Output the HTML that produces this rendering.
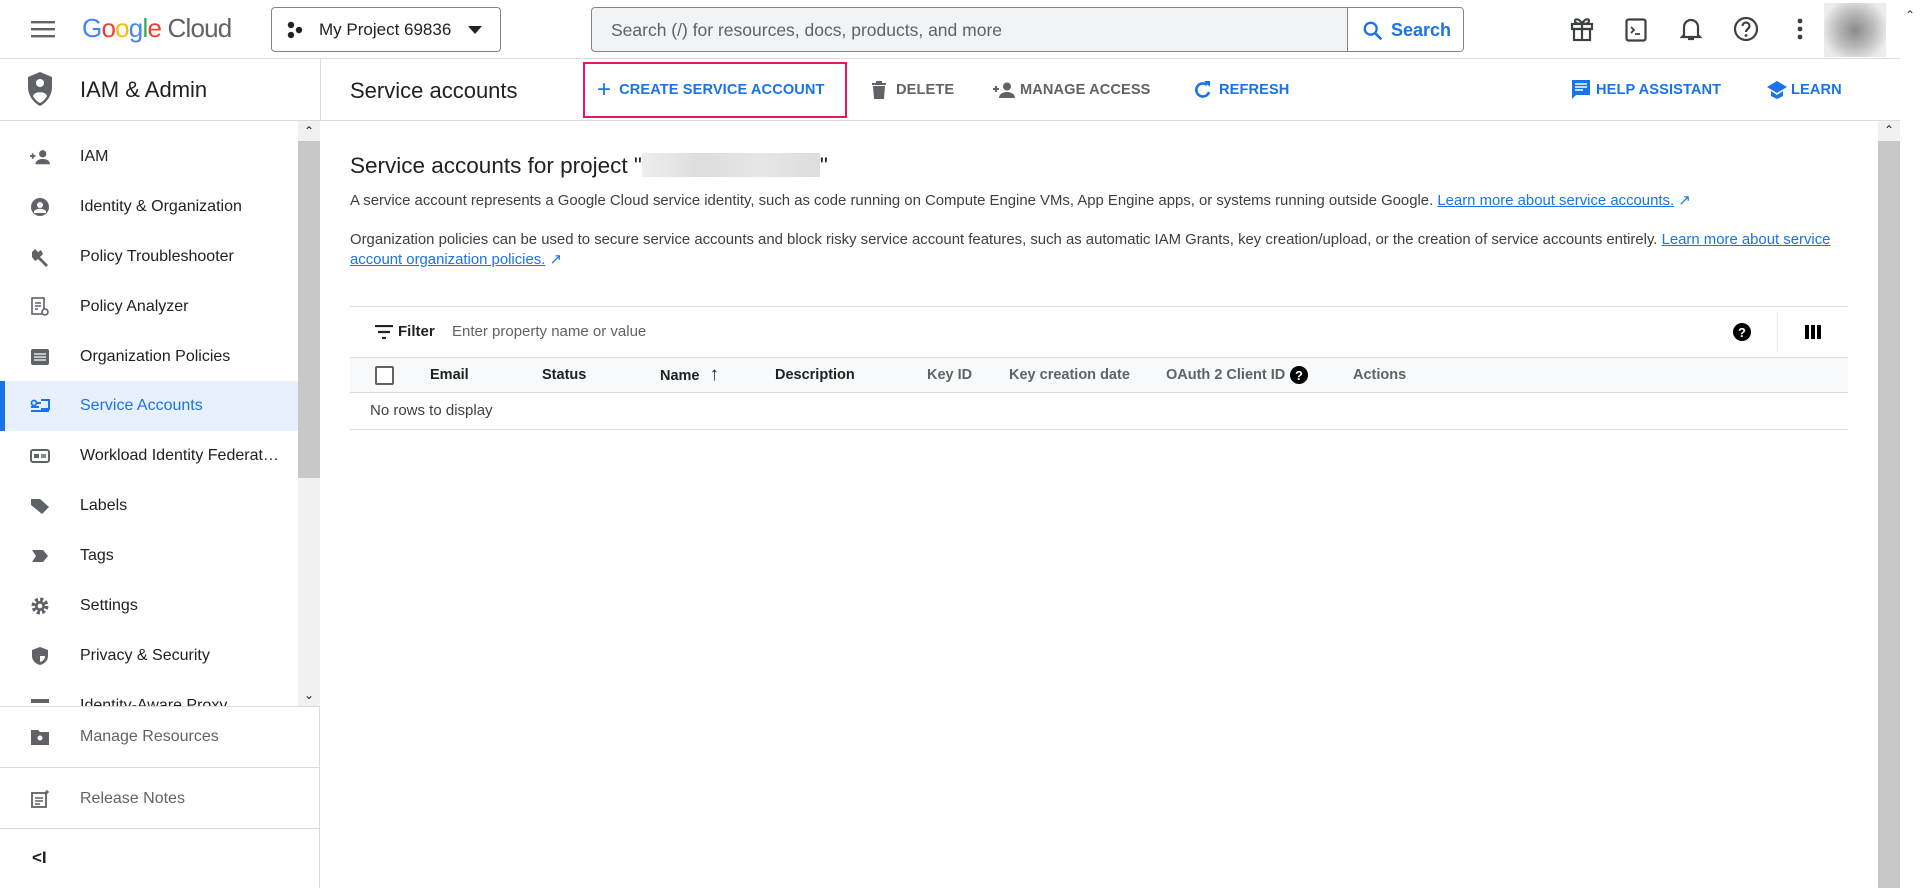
<!DOCTYPE html>
<html><head><meta charset="utf-8"><style>
*{box-sizing:border-box;margin:0;padding:0}
body{width:1920px;height:888px;overflow:hidden;font-family:"Liberation Sans",Arial,sans-serif;color:#202124;background:#fff;position:relative}
.abs{position:absolute}
.hdr{left:0;top:0;width:1920px;height:59px;border-bottom:1px solid #dadce0;background:#fff}
.bar2{left:0;top:59px;width:1900px;height:62px;border-bottom:1px solid #dadce0}
.side{left:0;top:121px;width:320px;height:767px;border-right:1px solid #dadce0}
.item{position:absolute;left:0;width:298px;height:50px;display:flex;align-items:center;font-size:16px;color:#202124}
.item .ic{position:absolute;left:30px;width:20px;height:20px}
.item span{position:absolute;left:80px}
.btn{position:absolute;top:59px;height:62px;display:flex;align-items:center;font-size:14.6px;font-weight:bold;letter-spacing:.1px}
.gray{color:#5f6368}.blue{color:#1a73e8}
a{color:#1a73e8;text-decoration:underline}
.th{position:absolute;top:357px;height:36px;line-height:36px;font-size:14.5px;font-weight:bold;color:#202124}
.th.g{color:#5f6368}
</style></head><body>
<div class="abs hdr">
 <svg class="abs" style="left:31px;top:19px" width="24" height="20" viewBox="0 0 24 20"><rect y="2" width="24" height="2.4" fill="#5f6368"/><rect y="9" width="24" height="2.4" fill="#5f6368"/><rect y="16" width="24" height="2.4" fill="#5f6368"/></svg>
 <div class="abs" style="left:82px;top:13px;font-size:26px;letter-spacing:-.8px"><span style="color:#4285f4">G</span><span style="color:#ea4335">o</span><span style="color:#fbbc04">o</span><span style="color:#4285f4">g</span><span style="color:#34a853">l</span><span style="color:#ea4335">e</span><span style="color:#5f6368"> Cloud</span></div>
 <div class="abs" style="left:271px;top:7px;width:230px;height:45px;border:1px solid #80868b;border-radius:4px">
  <svg class="abs" style="left:14px;top:13px" width="18" height="18" viewBox="0 0 18 18"><circle cx="5" cy="4" r="3.2" fill="#202124"/><circle cx="13" cy="9" r="3.2" fill="#202124"/><circle cx="5" cy="14" r="3.2" fill="#202124"/></svg>
  <div class="abs" style="left:47px;top:12px;font-size:17px">My Project 69836</div>
  <svg class="abs" style="left:196px;top:18px" width="14" height="8"><path d="M0 0h14L7 8z" fill="#202124"/></svg>
 </div>
 <div class="abs" style="left:591px;top:7px;width:873px;height:45px;border:1px solid #80868b;border-radius:4px;background:#f1f3f4;overflow:hidden">
  <div class="abs" style="left:19px;top:12px;font-size:17.5px;color:#5f6368">Search (/) for resources, docs, products, and more</div>
  <div class="abs" style="left:755px;top:0;width:118px;height:45px;background:#fff;border-left:1px solid #80868b">
   <svg class="abs" style="left:14px;top:12px" width="22" height="22" viewBox="0 0 24 24"><circle cx="9.5" cy="9.5" r="6.5" fill="none" stroke="#1a73e8" stroke-width="2.5"/><path d="M14 14l7 7" stroke="#1a73e8" stroke-width="2.8"/></svg>
   <div class="abs blue" style="left:43px;top:12px;font-size:18px;font-weight:bold">Search</div>
  </div>
 </div>
 <svg class="abs" style="left:1570px;top:16px" width="24" height="26" viewBox="0 0 24 26"><g fill="none" stroke="#3c4043" stroke-width="2.2"><rect x="2" y="8" width="20" height="5"/><rect x="4" y="13" width="16" height="11"/><path d="M12 8v16M12 8c-2-5-7-6-7-3s5 3 7 3c2 0 7 0 7-3s-5-2-7 3"/></g></svg>
 <svg class="abs" style="left:1625px;top:18px" width="22" height="24" viewBox="0 0 22 24"><rect x="1.5" y="1.5" width="19" height="21" rx="2" fill="none" stroke="#3c4043" stroke-width="2.2"/><path d="M6 9l3 3-3 3M10 16h5" stroke="#3c4043" stroke-width="1.8" fill="none"/></svg>
 <svg class="abs" style="left:1680px;top:16px" width="22" height="26" viewBox="0 0 22 26"><path d="M4 19V11a7 7 0 0114 0v8l2 2H2z" fill="none" stroke="#3c4043" stroke-width="2.2"/><path d="M8 23h6" stroke="#3c4043" stroke-width="2.2"/></svg>
 <svg class="abs" style="left:1733px;top:16px" width="26" height="26" viewBox="0 0 26 26"><circle cx="13" cy="13" r="11" fill="none" stroke="#3c4043" stroke-width="2.2"/><path d="M9.5 10a3.5 3.5 0 117 0c0 3-3.5 3-3.5 6" fill="none" stroke="#3c4043" stroke-width="2.2"/><circle cx="13" cy="19.5" r="1.4" fill="#3c4043"/></svg>
 <svg class="abs" style="left:1797px;top:18px" width="6" height="22"><circle cx="3" cy="3" r="2.4" fill="#3c4043"/><circle cx="3" cy="11" r="2.4" fill="#3c4043"/><circle cx="3" cy="19" r="2.4" fill="#3c4043"/></svg>
 <div class="abs" style="left:1824px;top:3px;width:62px;height:54px;background:radial-gradient(circle,#8a8a8a 0,#bcbcbc 45%,#ececec 80%)"></div>
</div>
<div class="abs" style="left:1900px;top:0;width:20px;height:888px;background:#fff"><div style="font-size:12px;color:#333;text-align:center;margin-top:8px">&#8963;</div></div>
<div class="abs bar2">
 <svg class="abs" style="left:26px;top:12px" width="28" height="36" viewBox="0 0 28 36"><path d="M14 1l12 5v10c0 9-6 16-12 19C8 32 2 25 2 16V6z" fill="#5f6368"/><circle cx="14" cy="12" r="4" fill="#fff"/><path d="M7 25c1-5 13-5 14 0c-2 4-5 6-7 7c-2-1-5-3-7-7z" fill="#fff"/></svg>
 <div class="abs" style="left:80px;top:18px;font-size:22px">IAM &amp; Admin</div>
 <div class="abs" style="left:320px;top:0;width:1px;height:62px;background:#dadce0"></div>
 <div class="abs" style="left:350px;top:19px;font-size:22px">Service accounts</div>
</div>
<div class="abs" style="left:583px;top:62px;width:264px;height:56px;border:2px solid #e8175d"></div>
<div class="btn blue" style="left:597px"><span style="font-size:24px;font-weight:normal;margin-right:8px">+</span>CREATE SERVICE ACCOUNT</div>
<div class="btn gray" style="left:871px"><svg width="16" height="18" viewBox="0 0 16 18" style="margin-right:9px"><path d="M1 2h14v2H1zM5 0h6v2H5zM2 5h12l-1 13H3z" fill="#5f6368"/></svg>DELETE</div>
<div class="btn gray" style="left:993px"><svg width="22" height="16" viewBox="0 0 22 16" style="margin-right:5px"><path d="M3 4v6M0 7h6" stroke="#5f6368" stroke-width="2"/><circle cx="14" cy="4.5" r="4" fill="#5f6368"/><path d="M6 16c0-4 4-6 8-6s8 2 8 6z" fill="#5f6368"/></svg>MANAGE ACCESS</div>
<div class="btn blue" style="left:1194px"><svg width="18" height="20" viewBox="0 0 18 20" style="margin-right:7px"><path d="M15 12a6.5 6.5 0 11-2-7" fill="none" stroke="#1a73e8" stroke-width="2.6"/><path d="M10 1h6v6z" fill="#1a73e8"/></svg>REFRESH</div>
<div class="btn blue" style="left:1571px"><svg width="20" height="22" viewBox="0 0 20 22" style="margin-right:5px"><path d="M1 1h18v15H5l-4 4z" fill="#1a73e8"/><path d="M4 5h12M4 8h12M4 11h8" stroke="#fff" stroke-width="1.6"/></svg>HELP ASSISTANT</div>
<div class="btn blue" style="left:1767px"><svg width="20" height="20" viewBox="0 0 20 20" style="margin-right:4px"><path d="M10 1l10 6-10 6L0 7z" fill="#1a73e8"/><path d="M4 11v5l6 3 6-3v-5l-6 4z" fill="#1a73e8"/></svg>LEARN</div>
<div class="abs" style="left:1878px;top:121px;width:22px;height:767px;background:#c8c8c8"></div>
<div class="abs" style="left:1878px;top:121px;width:22px;height:20px;background:#f1f1f1;font-size:12px;text-align:center;line-height:18px">&#8963;</div>
<div class="abs side">
 <div class="abs" style="left:298px;top:0;width:22px;height:585px;background:#f1f1f1"></div>
 <div class="abs" style="left:298px;top:20px;width:22px;height:337px;background:#c8c8c8"></div>
 <div class="abs" style="left:298px;top:0;width:22px;height:20px;text-align:center;font-size:12px;line-height:20px">&#8963;</div>
 <div class="abs" style="left:298px;top:565px;width:22px;height:20px;text-align:center;font-size:12px;line-height:18px">&#8964;</div>
 <div class="abs" style="left:0;top:0;width:298px;height:585px;overflow:hidden">
  <div class="item" style="top:11px"><svg class="ic" viewBox="0 0 22 16"><path d="M3 4v6M0 7h6" stroke="#5f6368" stroke-width="2"/><circle cx="14" cy="4.5" r="4" fill="#5f6368"/><path d="M6 16c0-4 4-6 8-6s8 2 8 6z" fill="#5f6368"/></svg><span>IAM</span></div>
  <div class="item" style="top:61px"><svg class="ic" viewBox="0 0 20 20"><circle cx="10" cy="10" r="9" fill="#5f6368"/><circle cx="10" cy="8" r="3" fill="#fff"/><path d="M4 14c3-3 9-3 12 0v2H4z" fill="#fff"/></svg><span>Identity &amp; Organization</span></div>
  <div class="item" style="top:111px"><svg class="ic" viewBox="0 0 20 20"><path d="M2 5l3-3 3 3 3-2 2 4-3 3 8 8-2 2-8-8-3 2-3-4z" fill="#5f6368"/></svg><span>Policy Troubleshooter</span></div>
  <div class="item" style="top:161px"><svg class="ic" viewBox="0 0 20 20"><rect x="2" y="1" width="12" height="16" fill="none" stroke="#5f6368" stroke-width="1.6"/><path d="M5 6h6M5 9h6M5 12h3" stroke="#5f6368" stroke-width="1.4"/><circle cx="15" cy="15" r="3" fill="#fff" stroke="#5f6368" stroke-width="1.6"/></svg><span>Policy Analyzer</span></div>
  <div class="item" style="top:211px"><svg class="ic" viewBox="0 0 20 20"><rect x="1" y="2" width="18" height="16" rx="2" fill="#5f6368"/><path d="M4 7h12M4 10h12M4 13h12" stroke="#fff" stroke-width="1.3"/></svg><span>Organization Policies</span></div>
  <div class="item" style="top:260px;background:#e8f0fe"><div class="abs" style="left:0;top:0;width:5px;height:50px;background:#1a73e8"></div><svg class="ic" viewBox="0 0 20 20"><circle cx="4" cy="7" r="2.5" fill="none" stroke="#1a73e8" stroke-width="1.8"/><path d="M7 7h4M11 4h8v9h-8M1 15h18" stroke="#1a73e8" stroke-width="2" fill="none"/><path d="M1 11h8" stroke="#1a73e8" stroke-width="2"/></svg><span class="blue">Service Accounts</span></div>
  <div class="item" style="top:310px"><svg class="ic" viewBox="0 0 20 20"><rect x="1" y="4" width="18" height="12" rx="2" fill="none" stroke="#5f6368" stroke-width="2"/><rect x="4" y="8" width="5" height="4" fill="#5f6368"/><path d="M11 9h5M11 11h5" stroke="#5f6368" stroke-width="1.4"/></svg><span>Workload Identity Federat…</span></div>
  <div class="item" style="top:360px"><svg class="ic" viewBox="0 0 20 20"><path d="M1 3h9l9 8-7 7-11-9z" fill="#5f6368"/></svg><span>Labels</span></div>
  <div class="item" style="top:410px"><svg class="ic" viewBox="0 0 20 20"><path d="M2 4h11l5 6-5 6H2l4-6z" fill="#5f6368"/></svg><span>Tags</span></div>
  <div class="item" style="top:460px"><svg class="ic" viewBox="0 0 20 20"><circle cx="10" cy="10" r="6.5" fill="none" stroke="#5f6368" stroke-width="4" stroke-dasharray="3 2.1"/><circle cx="10" cy="10" r="5" fill="#5f6368"/><circle cx="10" cy="10" r="2.3" fill="#fff"/></svg><span>Settings</span></div>
  <div class="item" style="top:510px"><svg class="ic" viewBox="0 0 20 20"><path d="M10 1l8 3v6c0 5-4 8-8 9C6 18 2 15 2 10V4z" fill="#5f6368"/><path d="M10 4v12c3-1 5-3 5-6V10h-5z" fill="#fff"/></svg><span>Privacy &amp; Security</span></div>
  <div class="item" style="top:560px"><svg class="ic" viewBox="0 0 20 20"><rect x="1" y="3" width="18" height="4" fill="#5f6368"/></svg><span>Identity-Aware Proxy</span></div>
 </div>
 <div class="abs" style="left:0;top:585px;width:320px;height:1px;background:#dadce0"></div>
 <div class="item" style="top:591px;width:320px;color:#5f6368"><svg class="ic" viewBox="0 0 20 20"><path d="M1 3h7l2 2h9v13H1z" fill="#5f6368"/><circle cx="10" cy="11" r="2.5" fill="#fff"/></svg><span>Manage Resources</span></div>
 <div class="abs" style="left:0;top:646px;width:320px;height:1px;background:#dadce0"></div>
 <div class="item" style="top:653px;width:320px;color:#5f6368"><svg class="ic" viewBox="0 0 20 20"><rect x="2" y="4" width="14" height="14" fill="none" stroke="#5f6368" stroke-width="1.8"/><path d="M5 9h8M5 12h8M5 15h5" stroke="#5f6368" stroke-width="1.4"/><path d="M17 1v4M15 3h4" stroke="#5f6368" stroke-width="1.3"/></svg><span>Release Notes</span></div>
 <div class="abs" style="left:0;top:707px;width:320px;height:1px;background:#dadce0"></div>
 <div class="abs" style="left:32px;top:727px;font-size:17px;font-weight:bold;color:#202124">&lt;I</div>
</div>
<div class="abs" style="left:350px;top:153px;font-size:22.5px">Service accounts for project "<span style="display:inline-block;width:178px;height:24px;vertical-align:-4px;background:linear-gradient(90deg,#eee,#ddd,#e6e6e6,#ddd)"></span>"</div>
<div class="abs" style="left:350px;top:191px;font-size:14.9px;color:#3c4043;white-space:nowrap">A service account represents a Google Cloud service identity, such as code running on Compute Engine VMs, App Engine apps, or systems running outside Google. <a>Learn more about service accounts.</a> <span class="blue">&#8599;</span></div>
<div class="abs" style="left:350px;top:230px;width:1495px;font-size:14.9px;line-height:20px;color:#3c4043">Organization policies can be used to secure service accounts and block risky service account features, such as automatic IAM Grants, key creation/upload, or the creation of service accounts entirely. <a>Learn more about service account organization policies.</a> <span class="blue">&#8599;</span></div>
<div class="abs" style="left:350px;top:306px;width:1498px;height:1px;background:#dadce0"></div>
<svg class="abs" style="left:375px;top:325px" width="18" height="14"><path d="M0 1h18M3 7h12M7 13h4" stroke="#202124" stroke-width="2.2"/></svg>
<div class="abs" style="left:398px;top:323px;font-size:15px;font-weight:bold">Filter</div>
<div class="abs" style="left:452px;top:323px;font-size:15px;color:#5f6368">Enter property name or value</div>
<svg class="abs" style="left:1733px;top:323px" width="18" height="18"><circle cx="9" cy="9" r="9" fill="#000"/><text x="9" y="14" font-size="13" font-weight="bold" fill="#fff" text-anchor="middle" font-family="Liberation Sans">?</text></svg>
<div class="abs" style="left:1777px;top:312px;width:1px;height:40px;background:#e8eaed"></div>
<svg class="abs" style="left:1805px;top:325px" width="16" height="14"><rect x="0" width="4" height="14"/><rect x="6" width="4" height="14"/><rect x="12" width="4" height="14"/></svg>
<div class="abs" style="left:350px;top:357px;width:1498px;height:36px;background:#f8f9fa;border-top:1px solid #dadce0;border-bottom:1px solid #dadce0"></div>
<div class="abs" style="left:375px;top:366px;width:19px;height:19px;border:2px solid #5f6368;border-radius:2px;background:#fff"></div>
<div class="th" style="left:430px">Email</div>
<div class="th" style="left:542px">Status</div>
<div class="th" style="left:660px">Name <span style="font-size:19px;margin-left:6px">&#8593;</span></div>
<div class="th" style="left:775px">Description</div>
<div class="th g" style="left:927px">Key ID</div>
<div class="th g" style="left:1009px">Key creation date</div>
<div class="th g" style="left:1166px">OAuth 2 Client ID</div>
<svg class="abs" style="left:1290px;top:366px" width="18" height="18"><circle cx="9" cy="9" r="9" fill="#000"/><text x="9" y="14" font-size="13" font-weight="bold" fill="#fff" text-anchor="middle" font-family="Liberation Sans">?</text></svg>
<div class="th g" style="left:1353px">Actions</div>
<div class="abs" style="left:370px;top:402px;font-size:15px;color:#3c4043">No rows to display</div>
<div class="abs" style="left:350px;top:429px;width:1498px;height:1px;background:#dadce0"></div>
</body></html>
